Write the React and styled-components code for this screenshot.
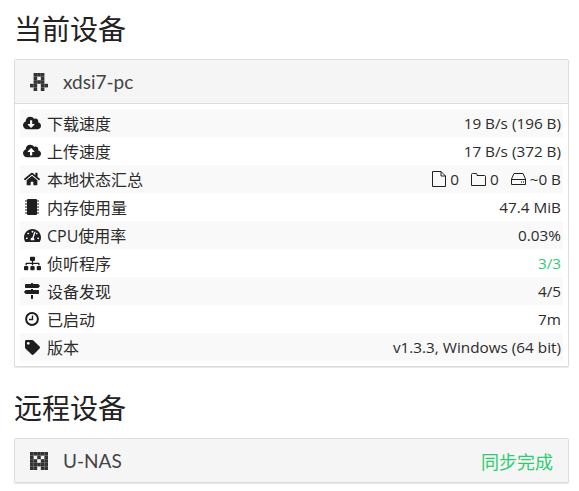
import React from "react";
import styled, { createGlobalStyle } from "styled-components";
import {
  FaCloudDownloadAlt,
  FaCloudUploadAlt,
  FaHome,
  FaTachometerAlt,
  FaSitemap,
  FaMapSigns,
  FaTag,
} from "react-icons/fa";

const GlobalStyle = createGlobalStyle`
  html, body {
    margin: 0;
    padding: 0;
    background: #fff;
    color: #2b2b2b;
    font-family: "Open Sans", "Noto Sans CJK SC", sans-serif;
  }
`;

const ChipIcon = () => (
  <svg width="16" height="16" viewBox="0 0 16 16" fill="currentColor">
    <rect x="3" y="0" width="10" height="16" rx="1" />
    {[2, 5, 8, 11, 14].map((y) => (
      <path key={y} d={`M1 ${y - 0.5}h2v1h-2zM13 ${y - 0.5}h2v1h-2z`} />
    ))}
  </svg>
);

const ClockIcon = () => (
  <svg width="14" height="14" viewBox="0 0 14 14" fill="none" stroke="currentColor">
    <circle cx="7" cy="7" r="5.9" strokeWidth="2" />
    <path d="M7.5 3.5V7.5H4" strokeWidth="1.4" />
  </svg>
);

const FileIcon = () => (
  <LineIcon width="14" height="16" viewBox="0 0 14 16">
    <path d="M0.5 0.5H9L13.5 5V15.5H0.5Z M9 0.5V5H13.5" />
  </LineIcon>
);

const FolderIcon = () => (
  <LineIcon width="15" height="13" viewBox="0 0 15 13">
    <path d="M0.5 12.5V1.5Q0.5 0.5 1.5 0.5H5Q6 0.5 6 1.5V2.5H13.5Q14.5 2.5 14.5 3.5V12.5Z" />
  </LineIcon>
);

const DiskIcon = () => (
  <LineIcon width="15" height="12" viewBox="0 0 15 12">
    <path d="M3 0.5H12L14.5 6V11.5H0.5V6Z M0.5 6.5H14.5" />
    <path d="M10 9H10.8M12 9H12.8" strokeWidth="1.5" />
  </LineIcon>
);

const rows = [
  { icon: <FaCloudDownloadAlt size={18} />, label: "下载速度", value: "19 B/s (196 B)" },
  { icon: <FaCloudUploadAlt size={18} />, label: "上传速度", value: "17 B/s (372 B)" },
  { icon: <FaHome size={16} />, label: "本地状态汇总", summary: true },
  { icon: <ChipIcon />, label: "内存使用量", value: "47.4 MiB" },
  { icon: <FaTachometerAlt size={17} />, label: "CPU使用率", value: "0.03%" },
  { icon: <FaSitemap size={17} />, label: "侦听程序", value: "3/3", ok: true },
  { icon: <FaMapSigns size={16} />, label: "设备发现", value: "4/5" },
  { icon: <ClockIcon />, label: "已启动", value: "7m" },
  { icon: <FaTag size={15} />, label: "版本", value: "v1.3.3, Windows (64 bit)" },
];

const localId = [
  [0, 1, 1, 1, 0],
  [0, 1, 0, 1, 0],
  [0, 1, 1, 1, 0],
  [1, 1, 0, 1, 1],
  [0, 1, 0, 1, 0],
];

const remoteId = [
  [1, 1, 1, 1, 1],
  [1, 0, 1, 0, 1],
  [1, 1, 0, 1, 1],
  [1, 1, 1, 1, 1],
  [1, 1, 0, 1, 1],
];

function Identicon({ cells }) {
  return (
    <IdenticonSvg viewBox="0 0 5 5">
      {cells.map((row, y) =>
        row.map((on, x) => (on ? <rect key={x + "-" + y} x={x} y={y} width="1" height="1" /> : null))
      )}
    </IdenticonSvg>
  );
}

export default function App() {
  return (
    <Page>
      <GlobalStyle />
      <Section>
        <Heading>当前设备</Heading>
        <Panel>
          <PanelHeader>
            <Identicon cells={localId} />
            <DeviceName>xdsi7-pc</DeviceName>
          </PanelHeader>
          <PanelBody>
            {rows.map((row) => (
              <Row key={row.label}>
                <RowIcon>{row.icon}</RowIcon>
                <Label>{row.label}</Label>
                {row.summary ? (
                  <Value>
                    <Stat>
                      <FileIcon /> 0
                    </Stat>
                    <Stat>
                      <FolderIcon /> 0
                    </Stat>
                    <Stat>
                      <DiskIcon /> ~0 B
                    </Stat>
                  </Value>
                ) : (
                  <Value $ok={row.ok}>{row.value}</Value>
                )}
              </Row>
            ))}
          </PanelBody>
        </Panel>
      </Section>
      <Section>
        <Heading>远程设备</Heading>
        <Panel>
          <PanelHeader>
            <Identicon cells={remoteId} />
            <DeviceName>U-NAS</DeviceName>
            <Status>同步完成</Status>
          </PanelHeader>
        </Panel>
      </Section>
    </Page>
  );
}

const Page = styled.div`
  padding: 0 10px 0 14px;
`;
const Section = styled.section`
  margin-bottom: 12px;
`;
const Heading = styled.h1`
  margin: 0;
  height: 59px;
  padding-top: 9px;
  box-sizing: border-box;
  font-size: 28px;
  line-height: 40px;
  font-weight: 400;
  color: #222;
`;
const Panel = styled.div`
  background: #fff;
  border: 1px solid #ddd;
  border-radius: 2px;
  box-shadow: 0 1px 1px rgba(0, 0, 0, 0.1);
`;
const PanelHeader = styled.div`
  display: flex;
  align-items: center;
  height: 43px;
  padding: 0 15px;
  background: #f5f5f5;
  color: #444;
  font-size: 18px;
  & + div {
    border-top: 1px solid #ddd;
  }
`;
const IdenticonSvg = styled.svg`
  width: 18px;
  height: 18px;
  fill: #333;
  flex: none;
`;
const DeviceName = styled.span`
  margin-left: 15px;
  font-family: Lato, "Noto Sans CJK SC", sans-serif;
  font-size: 19px;
`;
const Status = styled.span`
  margin-left: auto;
  color: #2ecc71;
`;
const PanelBody = styled.div`
  padding: 5px;
`;
const Row = styled.div`
  display: flex;
  align-items: center;
  height: 28px;
  padding: 0 2px 0 3px;
  font-size: 15.3px;
  &:nth-child(odd) {
    background: #f9f9f9;
  }
`;
const RowIcon = styled.span`
  display: flex;
  justify-content: center;
  width: 18px;
  margin-right: 6px;
  color: #1e1e1e;
`;
const Label = styled.span`
  font-size: 16px;
`;
const Value = styled.span`
  margin-left: auto;
  display: flex;
  align-items: center;
  color: ${(p) => (p.$ok ? "#2ecc71" : "inherit")};
`;
const Stat = styled.span`
  display: inline-flex;
  align-items: center;
  gap: 4px;
  margin-left: 12px;
`;
const LineIcon = styled.svg`
  fill: none;
  stroke: #222;
  stroke-width: 1;
`;
